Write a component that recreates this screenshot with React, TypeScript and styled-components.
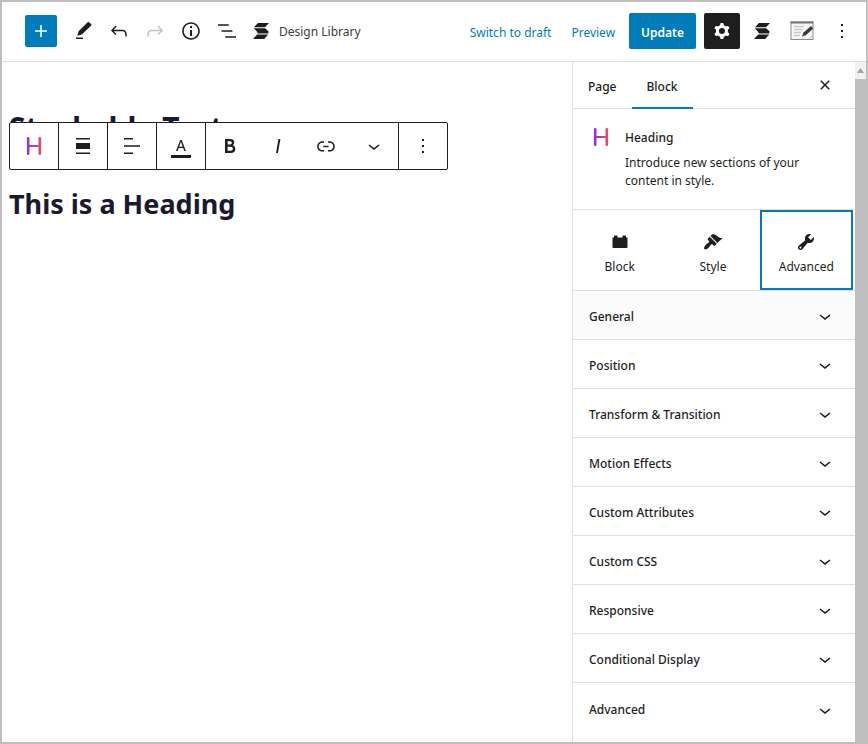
import React from "react";
import styled, { createGlobalStyle, css } from "styled-components";

const ink = "#1e1e1e";
const blue = "#007cba";
const line = "#e0e0e0";
const chrome = "#bfbfbf";

const GlobalStyle = createGlobalStyle`
  * { box-sizing: border-box; }
  body {
    margin: 0;
    background: #fff;
    color: ${ink};
    font-family: "Noto Sans", "Open Sans", sans-serif;
    font-size: 12px;
  }
  button { font: inherit; color: inherit; }
  h1, h2, p { margin: 0; }
  svg { flex-shrink: 0; }
`;

const Frame = styled.div`
  display: flex;
  flex-direction: column;
  min-height: 100vh;
  border: 2px solid ${chrome};
`;

const Header = styled.header`
  display: flex;
  align-items: center;
  justify-content: space-between;
  height: 60px;
  padding: 0 6px 2px 23px;
  border-bottom: 1px solid ${line};
`;

const Group = styled.div<{ $gap?: number }>`
  display: flex;
  align-items: center;
  gap: ${(p) => p.$gap ?? 0}px;
`;

const bare = css`
  display: flex;
  align-items: center;
  justify-content: center;
  padding: 0;
  border: 0;
  background: none;
  cursor: pointer;
`;

const IconButton = styled.button<{ $dark?: boolean }>`
  ${bare}
  width: 36px;
  height: 36px;
  border-radius: 2px;
  ${(p) => p.$dark && css`background: ${ink}; color: #fff;`}
  &:disabled { color: #c4c4c4; cursor: default; }
`;

const AddButton = styled.button`
  ${bare}
  width: 32px;
  height: 32px;
  margin-right: 8px;
  border-radius: 2px;
  background: ${blue};
  color: #fff;
`;

const LibraryButton = styled.button`
  ${bare}
  gap: 10px;
  height: 36px;
  padding: 0 8px;
`;

const LibraryLabel = styled.span`
  padding-top: 2px;
  color: #3c3c3c;
`;

const TextButton = styled.button`
  ${bare}
  padding-top: 3px;
  color: ${blue};
`;

const UpdateButton = styled.button`
  ${bare}
  height: 36px;
  padding: 3px 12px 0;
  border-radius: 2px;
  background: ${blue};
  color: #fff;
  font-weight: 600;
`;

const Body = styled.div`
  display: flex;
  flex: 1;
`;

const Canvas = styled.main`
  position: relative;
  flex: 1;
  min-width: 0;
  padding: 44px 7px;
  color: #1a1a2e;
`;

const Title = styled.h1`
  font-size: 30px;
  line-height: 44px;
  font-weight: 700;
`;

const Heading = styled.h2`
  margin-top: 32px;
  font-size: 27px;
  line-height: 44px;
  font-weight: 700;
`;

const Toolbar = styled.div`
  position: absolute;
  top: 60px;
  left: 7px;
  display: flex;
  height: 48px;
  border: 1px solid ${ink};
  border-radius: 2px;
  background: #fff;
  color: ${ink};
`;

const ToolGroup = styled.div`
  display: flex;
  & + & { border-left: 1px solid ${ink}; }
`;

const ToolButton = styled.button`
  ${bare}
  width: 48px;
`;

const Sidebar = styled.aside`
  width: 283px;
  border-left: 1px solid ${line};
`;

const Tabs = styled.div`
  display: flex;
  height: 47px;
  border-bottom: 1px solid ${line};
`;

const Tab = styled.button<{ $active?: boolean }>`
  ${bare}
  height: 47px;
  padding: 3px 15px 0;
  font-weight: 500;
  border-bottom: 2px solid ${(p) => (p.$active ? blue : "transparent")};
`;

const CloseButton = styled(IconButton)`
  margin: 5px 12px 0 auto;
`;

const BlockCard = styled.section`
  display: flex;
  gap: 12px;
  min-height: 101px;
  padding: 16px;
  border-bottom: 1px solid ${line};
`;

const CardBody = styled.div`
  padding-top: 3px;
`;

const CardName = styled.h2`
  margin-bottom: 6px;
  font-size: 12px;
  line-height: 20px;
  font-weight: 500;
`;

const CardText = styled.p`
  line-height: 18px;
`;

const PanelTabs = styled.div`
  display: grid;
  grid-template-columns: repeat(3, 1fr);
  height: 81px;
  padding-right: 2px;
  border-bottom: 1px solid ${line};
`;

const PanelTab = styled.button<{ $active?: boolean }>`
  ${bare}
  flex-direction: column;
  gap: 6px;
  padding-top: 8px;
  line-height: 18px;
  border: 2px solid ${(p) => (p.$active ? blue : "transparent")};
`;

const Panel = styled.button<{ $hover?: boolean }>`
  ${bare}
  justify-content: space-between;
  width: 100%;
  height: 49px;
  padding: 2px 18px 0 16px;
  font-weight: 500;
  background: ${(p) => (p.$hover ? "#fbfbfb" : "#fff")};
  border-bottom: 1px solid ${line};
  &:last-child { border-bottom: 0; height: 51px; }
`;

const Scrollbar = styled.div`
  width: 11px;
  background: ${chrome};
`;

const ScrollArrow = styled.div`
  display: flex;
  align-items: center;
  justify-content: center;
  height: 17px;
  background: #f1f1f1;
  color: #a3a3a3;
`;

const paths = {
  plus: "M18 11.2h-5.2V6h-1.6v5.2H6v1.6h5.2V18h1.6v-5.2H18z",
  pencil: "m20.1 5.1-1.7-1.7q-1-.8-2 .1L7.6 12.3l-1.3 4.5 4.5-1.3 9.2-8.8q.8-.8.1-1.6ZM12 18.5H5V20h7v-1.5Z",
  undo: "M18.3 11.7c-.6-.6-1.4-.9-2.3-.9H6.7l2.9-3.3-1.1-1-4.5 5L8.5 16l1-1-2.7-2.7H16c.5 0 .9.2 1.3.5 1 1 1 3.4 1 4.5v.3h1.5v-.2c0-1.5 0-4.3-1.5-5.7z",
  redo: "M15.6 6.5l-1.1 1 2.9 3.3H8c-.9 0-1.7.3-2.3.9-1.4 1.5-1.4 4.2-1.4 5.6v.2h1.5v-.3c0-1.1 0-3.5 1-4.5.3-.3.7-.5 1.3-.5h9.2L14.5 15l1.1 1.1 4.6-4.6-4.6-5z",
  info: "M12 3.2c-4.8 0-8.8 3.9-8.8 8.8 0 4.8 3.9 8.8 8.8 8.8 4.8 0 8.8-3.9 8.8-8.8 0-4.8-4-8.8-8.8-8.8zm0 16c-4 0-7.2-3.3-7.2-7.2C4.8 8 8 4.8 12 4.8s7.2 3.3 7.2 7.2c0 4-3.2 7.2-7.2 7.2zM11 17h2v-6h-2v6zm0-8h2V7h-2v2z",
  list: "M13.8 5.2H3v1.5h10.8V5.2zm-3.6 12v1.5H21v-1.5H10.2zm7.2-6H6.6v1.5h10.8v-1.5z",
  more: "M13 19h-2v-2h2v2zm0-6h-2v-2h2v2zm0-6h-2V5h2v2z",
  bold: "M14.7 11.3c1-.6 1.5-1.6 1.5-3 0-2.3-1.3-3.4-4-3.4H7v14h5.8c1.4 0 2.5-.3 3.3-1 .8-.7 1.2-1.7 1.2-2.9.1-1.9-.8-3.1-2.6-3.7zm-5.1-4h2.3c.6 0 1.1.1 1.4.4.3.3.5.7.5 1.2s-.2 1-.5 1.2c-.3.3-.8.4-1.4.4H9.6V7.3zm4.6 9c-.4.3-1 .4-1.7.4H9.6v-3.9h2.9c.7 0 1.3.2 1.7.5.4.3.6.8.6 1.5s-.2 1.2-.6 1.5z",
  italic: "M12.5 5L10 19h1.9l2.5-14z",
  link: "M15.6 7.2H14v1.5h1.6c2 0 3.7 1.7 3.7 3.7s-1.7 3.7-3.7 3.7H14v1.5h1.6c2.8 0 5.2-2.3 5.2-5.2 0-2.9-2.3-5.2-5.2-5.2zM4.7 12.4c0-2 1.7-3.7 3.7-3.7H10V7.2H8.4c-2.9 0-5.2 2.3-5.2 5.2 0 2.9 2.3 5.2 5.2 5.2H10v-1.5H8.4c-2 0-3.7-1.7-3.7-3.7zm4.6.9h5.3v-1.5H9.3v1.5z",
  chevron: "M17.5 11.6L12 16l-5.5-4.4.9-1.2L12 14l4.5-3.6 1 1.2z",
  close: "M12 13.06l3.712 3.713 1.061-1.06L13.061 12l3.712-3.712-1.06-1.06L12 10.938 8.288 7.227l-1.061 1.06L10.939 12l-3.712 3.712 1.06 1.061L12 13.061z",
  width: "M5 4h14v1.5H5zM5 9h14v6H5zM5 18.5h14V20H5z",
  align: "M4 4h9v1.5H4zM4 11.2h16v1.5H4zM4 18.5h9V20H4z",
  color: "M12.7 6h-1.5L7 17h1.6l1.1-3h4.5l1.1 3h1.6L12.7 6zm-2.6 6.7 1.8-4.9 1.8 4.9h-3.6zM2 21h20v3H2z",
  cog: "M10.289 4.836A1 1 0 0111.275 4h1.306a1 1 0 01.987.836l.244 1.466c.787.26 1.503.679 2.108 1.218l1.393-.522a1 1 0 011.216.437l.653 1.13a1 1 0 01-.23 1.273l-1.148.944a6.025 6.025 0 010 2.435l1.149.946a1 1 0 01.23 1.272l-.653 1.13a1 1 0 01-1.216.437l-1.394-.522c-.605.54-1.32.958-2.108 1.218l-.244 1.466a1 1 0 01-.987.836h-1.306a1 1 0 01-.986-.836l-.244-1.466a5.995 5.995 0 01-2.108-1.218l-1.394.522a1 1 0 01-1.217-.436l-.653-1.131a1 1 0 01.23-1.272l1.149-.946a6.026 6.026 0 010-2.435l-1.148-.944a1 1 0 01-.23-1.272l.653-1.131a1 1 0 011.217-.437l1.393.522a5.994 5.994 0 012.108-1.218l.244-1.466zM14.929 12a3 3 0 11-6 0 3 3 0 016 0z",
};

const panelPaths = {
  Block: "M2.500 5.500H4V4q0-.5.5-.5H7q.5 0 .5.5v1.500h5V4q0-.5.5-.5h2.500q.5 0 .5.5v1.500h1.500V15q0 1-1 1h-13q-1 0-1-1z",
  Style: "M14.48 11.06L7.41 3.99l1.5-1.5c.5-.56 2.3-.47 3.51.32 1.21.8 1.43 1.28 2.91 2.1 1.18.64 2.45 1.26 4.45.85zm-.71.71L6.7 4.7 4.93 6.47c-.39.39-.39 1.02 0 1.41l1.06 1.06c.39.39.39 1.03 0 1.42-.6.6-1.43 1.11-2.21 1.69-.35.26-.7.53-1.01.84C1.43 14.23.4 16.08 1.4 17.07c.99 1 2.84-.03 4.18-1.36.31-.31.58-.66.85-1.02.57-.78 1.08-1.61 1.69-2.21.39-.39 1.02-.39 1.41 0l1.06 1.06c.39.39 1.02.39 1.41 0z",
  Advanced: "M16.68 9.77c-1.34 1.34-3.3 1.67-4.95.99l-5.41 6.52c-.99.99-2.59.99-3.58 0s-.99-2.59 0-3.57l6.52-5.42c-.68-1.65-.35-3.61.99-4.95 1.28-1.28 3.12-1.62 4.72-1.06l-2.89 2.89 2.82 2.82 2.86-2.87c.53 1.58.18 3.39-1.08 4.65zM3.81 16.21c.4.39 1.04.39 1.43 0 .4-.4.4-1.04 0-1.43-.39-.4-1.03-.4-1.43 0-.39.39-.39 1.03 0 1.43z",
};

type IconName = keyof typeof paths;
type PanelName = keyof typeof panelPaths;

const Icon = ({ name }: { name: IconName }) => (
  <svg width="24" height="24" viewBox="0 0 24 24" fill="currentColor" fillRule="evenodd" aria-hidden>
    <path d={paths[name]} />
  </svg>
);

const StackableLogo = () => (
  <svg width="16" height="16" viewBox="0 0 16 16" fill="currentColor" aria-hidden>
    <path d="M5 0h11l-4 4.3H.8zM.8 5.2h11.4L15.600 8.600 15.200 10.600H5L3.600 8.200zM4.200 11.500h11L11.200 16H0z" />
  </svg>
);

const HeadingLogo = ({ id }: { id: string }) => (
  <svg width="24" height="24" viewBox="0 0 24 24" aria-hidden>
    <defs>
      <linearGradient id={id} x1="4" x2="20" y1="0" y2="0" gradientUnits="userSpaceOnUse">
        <stop offset="0" stopColor="#8c33da" />
        <stop offset="1" stopColor="#f34957" />
      </linearGradient>
    </defs>
    <path
      fill={`url(#${id})`}
      d="M6.2 3q1.300 0 1.300 1.300V11h9V4.300q0-1.300 1.300-1.300t1.300 1.300v15.400q0 1.300-1.300 1.300t-1.300-1.300V13h-9v6.700q0 1.300-1.300 1.300t-1.300-1.300V4.300Q4.900 3 6.200 3z"
    />
  </svg>
);

const FormIcon = () => (
  <svg width="24" height="20" viewBox="0 0 24 20" aria-hidden>
    <rect x="1" y="1" width="22" height="17.5" fill="#f6f6f6" stroke="#8c8c8c" />
    <path d="M.5 1.5h23" stroke="#777" strokeWidth="2" />
    <path d="M4 5.5h10M4 8.5h9M4 11.5h7M4 14.5h6" stroke="#c9c9c9" strokeWidth="1.5" />
    <path d="m12 15.5 1.5-4 7.5-6.5 2.300 2.500-7.500 6.700z" fill="#3c3c3c" />
    <path d="M20.500 15.500 22 13v4.500h-5z" fill="#ddd" />
  </svg>
);

const panels = [
  "General",
  "Position",
  "Transform & Transition",
  "Motion Effects",
  "Custom Attributes",
  "Custom CSS",
  "Responsive",
  "Conditional Display",
  "Advanced",
];

const documentTools: { name: IconName; label: string; disabled?: boolean }[] = [
  { name: "pencil", label: "Tools" },
  { name: "undo", label: "Undo" },
  { name: "redo", label: "Redo", disabled: true },
  { name: "info", label: "Details" },
  { name: "list", label: "List view" },
];

const toolGroups: { name: IconName; label: string }[][] = [
  [{ name: "width", label: "Change width" }],
  [{ name: "align", label: "Align text" }],
  [{ name: "color", label: "Text color" }],
  [
    { name: "bold", label: "Bold" },
    { name: "italic", label: "Italic" },
    { name: "link", label: "Link" },
    { name: "chevron", label: "More formatting" },
  ],
  [{ name: "more", label: "Options" }],
];

export default function App() {
  return (
    <>
      <GlobalStyle />
      <Frame>
        <Header>
          <Group>
            <AddButton aria-label="Add block"><Icon name="plus" /></AddButton>
            {documentTools.map((b) => (
              <IconButton key={b.name} aria-label={b.label} disabled={b.disabled}>
                <Icon name={b.name} />
              </IconButton>
            ))}
            <LibraryButton>
              <StackableLogo />
              <LibraryLabel>Design Library</LibraryLabel>
            </LibraryButton>
          </Group>
          <Group $gap={14}>
            <Group $gap={20}>
              <TextButton>Switch to draft</TextButton>
              <TextButton>Preview</TextButton>
            </Group>
            <Group $gap={8}>
              <UpdateButton>Update</UpdateButton>
              <Group $gap={4}>
                <IconButton $dark aria-label="Settings"><Icon name="cog" /></IconButton>
                <IconButton aria-label="Stackable settings"><StackableLogo /></IconButton>
                <IconButton aria-label="Form settings"><FormIcon /></IconButton>
                <IconButton aria-label="Options"><Icon name="more" /></IconButton>
              </Group>
            </Group>
          </Group>
        </Header>
        <Body>
          <Canvas>
            <Title>Stackable Test</Title>
            <Heading>This is a Heading</Heading>
            <Toolbar role="toolbar" aria-label="Block tools">
              <ToolGroup>
                <ToolButton aria-label="Heading"><HeadingLogo id="toolbar-h" /></ToolButton>
              </ToolGroup>
              {toolGroups.map((group) => (
                <ToolGroup key={group[0].name}>
                  {group.map((t) => (
                    <ToolButton key={t.name} aria-label={t.label}><Icon name={t.name} /></ToolButton>
                  ))}
                </ToolGroup>
              ))}
            </Toolbar>
          </Canvas>
          <Sidebar>
            <Tabs>
              <Tab>Page</Tab>
              <Tab $active>Block</Tab>
              <CloseButton aria-label="Close settings"><Icon name="close" /></CloseButton>
            </Tabs>
            <BlockCard>
              <HeadingLogo id="card-h" />
              <CardBody>
                <CardName>Heading</CardName>
                <CardText>Introduce new sections of your content in style.</CardText>
              </CardBody>
            </BlockCard>
            <PanelTabs>
              {(Object.keys(panelPaths) as PanelName[]).map((name) => (
                <PanelTab key={name} $active={name === "Advanced"}>
                  <svg width="20" height="20" viewBox="0 0 20 20" fill="currentColor" aria-hidden>
                    <path d={panelPaths[name]} />
                  </svg>
                  {name}
                </PanelTab>
              ))}
            </PanelTabs>
            <div>
              {panels.map((name, i) => (
                <Panel key={name} $hover={i === 0} aria-expanded={false}>
                  {name}
                  <Icon name="chevron" />
                </Panel>
              ))}
            </div>
          </Sidebar>
          <Scrollbar>
            <ScrollArrow>
              <svg width="7" height="5" viewBox="0 0 7 5" fill="currentColor" aria-hidden><path d="M3.5 0 7 5H0z" /></svg>
            </ScrollArrow>
          </Scrollbar>
        </Body>
      </Frame>
    </>
  );
}
